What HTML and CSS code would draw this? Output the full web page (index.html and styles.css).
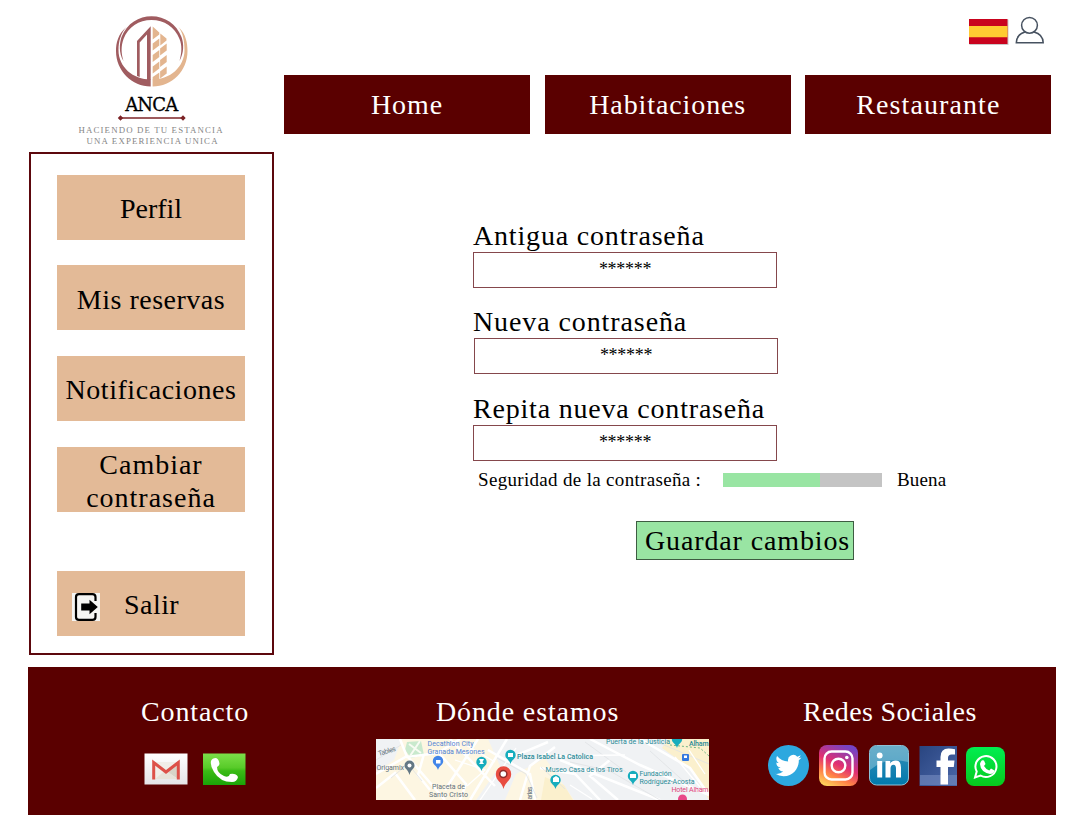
FILE: index.html
```html
<!DOCTYPE html>
<html lang="es">
<head>
<meta charset="utf-8">
<title>ANCA - Cambiar contraseña</title>
<link rel="stylesheet" href="styles.css">
</head>
<body>
<div class="page">
  <div class="left">
    <svg class="logo" width="180" height="147" viewBox="60 5 180 147">
      <path d="M126.500 27C118 34 116 43 116 51C116 71 132 86.500 150.700 86.500V79.500C133 79.500 118.500 67 118.500 50C118.500 41 121 33 126.500 27Z" fill="#a05c60"/>
      <path d="M178.500 27C186 34 187.500 43 187.500 51C187.500 71 172 86.500 152.600 86.500V79.500C170 79.500 184.500 67 184.500 50C184.500 41 183 33 178.500 27Z" fill="#e3b58f"/>
      <path d="M123.500 61C118.500 53 119.500 43 121.500 37C127 23 139 16.200 151.500 16.200C165 16.200 176.500 24 181.500 37C184 44 184 53 179.500 61C182 52 182 45 179.500 39C175 27 164 20 151.500 20C139 20 128 27 123.500 39C121 46 121 53 123.500 61Z" fill="#a05c60"/>
      <path d="M137 41L150.700 26.200V80H147V34.500L139.700 42.500V77L137 76Z" fill="#a05c60"/>
      <g fill="#e3b58f">
        <path d="M152.700 26.500L159.300 32.500V34.500L152.700 39.500ZM160.300 33.500L166.500 38.500V40.500L160.300 45.500Z"/>
        <path id="leaf" d="M152.700 43.500L159.300 38.500V45.500L152.700 50.500Z"/>
        <use href="#leaf" y="11.500"/><use href="#leaf" y="23"/><path d="M152.700 77L159.300 72.500V80H152.700Z"/>
        <use href="#leaf" x="7.400" y="5"/><use href="#leaf" x="7.400" y="16.500"/><use href="#leaf" x="7.400" y="28"/>
      </g>
      <text class="logo-name" x="151.700" y="110.500" text-anchor="middle" textLength="53">ANCA</text>
      <path d="M120 118H183" stroke="#7c2326" stroke-width="1.300"/>
      <path d="M120.500 115.300L123.200 118L120.500 120.700L117.800 118ZM183 115.300L185.700 118L183 120.700L180.300 118Z" fill="#7c2326"/>
      <text class="logo-tag" x="78.500" y="133" textLength="144">HACIENDO DE TU ESTANCIA</text>
      <text class="logo-tag" x="86.500" y="143.500" textLength="131">UNA EXPERIENCIA UNICA</text>
    </svg>
    <aside class="sidebar">
      <a class="item perfil">Perfil</a>
      <a class="item reservas">Mis reservas</a>
      <a class="item notis">Notificaciones</a>
      <a class="item cambiar">Cambiar<br>contraseña</a>
      <a class="item salir">
        <svg width="28" height="28" viewBox="0 0 28 28"><path fill="#f5f5f3" d="M0 0h28v28H0z"/><path d="M23.500 8V4Q23.500 1.200 20.500 1.200H7Q4 1.200 4 4V24Q4 26.800 7 26.800H20.500Q23.500 26.800 23.500 24V20" fill="none" stroke="#000" stroke-width="2.200"/><path d="M9.200 10.500H17.500V6.700L25.800 14L17.500 21.300V17.500H9.200Z"/></svg>
        <span>Salir</span>
      </a>
    </aside>
  </div>

  <div class="right">
    <div class="tools">
      <svg width="78" height="32" viewBox="967 15 78 32">
        <path d="M969.500 19.500H1008.500V45H969.500Z" fill="#c9c9c9"/><path d="M969 19H1007.500V44H969Z" fill="#c9031e"/><path d="M969 26H1007.500V37.300H969Z" fill="#ffcb32"/>
        <g fill="none" stroke="#475260" stroke-width="1.500"><circle cx="1029.500" cy="25.300" r="7.900"/><path d="M1025 32C1019.500 33.500 1016.500 37.500 1016.300 42.700H1043.200C1043 37.500 1040 33.500 1034 32"/></g>
      </svg>
    </div>
    <nav class="nav">
      <a class="home">Home</a><a class="hab">Habitaciones</a><a class="rest">Restaurante</a>
    </nav>
    <form class="form">
      <div class="field"><label class="l1">Antigua contraseña</label><div class="input">******</div></div>
      <div class="field second"><label class="l2">Nueva contraseña</label><div class="input">******</div></div>
      <div class="field"><label class="l3">Repita nueva contraseña</label><div class="input">******</div></div>
      <div class="strength"><span class="s-label">Seguridad de la contraseña :</span><div class="meter"><div class="level"></div></div><span class="s-value">Buena</span></div>
      <div class="save">Guardar cambios</div>
    </form>
  </div>

  <footer class="footer">
    <section class="contact">
      <h2>Contacto</h2>
      <svg width="104" height="34" viewBox="143 752 104 34">
        <defs>
          <linearGradient id="mail" x1="0" y1="0" x2="0" y2="1"><stop stop-color="#fff"/><stop offset="1" stop-color="#e5e5e8"/></linearGradient>
          <linearGradient id="tel" x1="0" y1="0" x2="0" y2="1"><stop stop-color="#7cdf49"/><stop offset=".45" stop-color="#58cb29"/><stop offset=".55" stop-color="#3bbb16"/><stop offset="1" stop-color="#1aa307"/></linearGradient>
        </defs>
        <path d="M144.500 753.500H187.500V784.500H144.500Z" fill="url(#mail)"/>
        <path d="M154 762H178V779H154Z" fill="#f1eee9"/><path d="M166 771L178 761V779Z" fill="#d8d4c8"/><path d="M155 779L166 770L177 779Z" fill="#e7e3d9"/>
        <path d="M153.700 779.500V762.500L166 772L178.300 762.500V779.500" fill="none" stroke="#dd5149" stroke-width="3"/>
        <path d="M203 753.500H245.500V785H203Z" fill="url(#tel)"/>
        <path d="M211 761Q212 758 216 758Q219 759 219.500 764Q219 766 217 767Q217 773 224 776Q229 778 230 774Q236 773 238 777Q237 782 232 782Q220 782 214 772Q210 766 211 761Z" fill="#fff"/>
      </svg>
    </section>
    <section class="where">
      <h2>Dónde estamos</h2>
      <svg class="map" width="333" height="61" viewBox="376 739 333 61">
        <path fill="#fdf6e2" d="M376 739H709V800H376Z"/>
        <path fill="#f0f2f4" d="M488 739H709V800H574L545 758L516 774L505 800H476L500 766ZM376 739H402L394 760L376 772Z"/>
        <path fill="#fbf0cd" d="M668 739H709V800L690 768L662 748ZM545 777L564 785L573 800H541Z"/>
        <path fill="#c9e9cd" d="M407 742L421 741L424 755L411 758L405 750Z"/>
        <g fill="none" stroke="#fff" stroke-width="2.500"><path d="M376 774L407 756L445 800M376 788L395 773L415 800M400 739L407 757L438 753L460 739M424 754L418 775L430 790M438 752L466 784L460 800M450 739L495 786M478 739L445 790M507 739L470 800M488 750L530 774L535 800M505 760L548 742M520 800L530 766L555 747M540 768L575 774L600 800M560 760L620 784L660 800M590 739L640 765L709 795M640 739L690 768L709 795M610 760L590 776L618 800"/></g>
        <g fill="none" stroke="#dfe2e5" stroke-width=".8"><path d="M497 758L526 774L537 798M541 767L565 789M570 762L610 771L660 800M585 742L626 772M650 751L689 786M376 760L401 745M391 778L408 764L422 781M650 739L709 764"/></g>
        <g fill="none" stroke="#fff" stroke-width="1.300"><path d="M455 760L485 770L467 786M466 745L495 762M516 748L480 800M675 757L700 787M689 750L705 774M570 785L592 799M543 756L625 755"/></g>
        <path d="M409 744L421 753M420 741L410 756" stroke="#f8fbf3" stroke-width="2"/>
        <path d="M670 745L700 748L709 756" fill="none" stroke="#70b686" stroke-dasharray="2 2"/>
        <path fill="#637784" d="M409.500 775C408 769 404.500 769 404.500 765.500A5 5 0 1 1 414.500 765.500C414.500 769 411 769 409.500 775Z"/>
        <path fill="#4285e9" d="M438 770C436.500 765 432.800 765 432.800 761A5.200 5.200 0 1 1 443.200 761C443.200 765 439.500 765 438 770Z"/>
        <g fill="#17adbd">
          <path id="p" d="M481.500 771C480 766 476.300 766 476.300 762A5.200 5.200 0 1 1 486.700 762C486.700 766 483 766 481.500 771Z"/>
          <use href="#p" x="29" y="-7"/><use href="#p" x="74" y="18"/><use href="#p" x="151.500" y="14"/><use href="#p" x="195.500" y="-23"/>
        </g>
        <rect x="682" y="754" width="7" height="7" rx="1" fill="#3579df"/><circle cx="682.500" cy="799" r="4.500" fill="#e84888"/>
        <g fill="#fff"><circle cx="409.500" cy="765.500" r="2"/><path d="M436 760H440.500V763.500H436ZM479 759H484L482.500 762L484 764H479L480.500 762ZM508 753H513V757H508ZM553 778L556 776L559 778V782H553ZM630 774H636V778H630ZM684 755.500H687V758H684Z"/></g>
        <path d="M503.500 789C501.500 781 495.800 781 495.800 774A7.700 7.700 0 0 1 511.200 774C511.200 781 505.500 781 503.500 789Z" fill="#e84c40"/><circle cx="503.300" cy="774" r="4.300" fill="#902d2a"/><circle cx="503.300" cy="774" r="2.800" fill="#fff"/>
        <g class="map-text">
          <g fill="#5385d5"><text x="427.500" y="746" textLength="46">Decathlon City</text><text x="427.500" y="753.700" textLength="57">Granada Mesones</text></g>
          <g fill="#63727d"><text x="376.500" y="770" textLength="27.500">Origamix</text><text x="432" y="789" textLength="33">Placeta de</text><text x="429" y="796.700" textLength="39">Santo Cristo</text><text transform="translate(379 756) rotate(-17)" textLength="18">Tables</text><text transform="translate(531.500 799.500) rotate(-90)" textLength="13">arias</text></g>
          <g fill="#298b98"><text class="strong" x="517" y="759" textLength="76">Plaza Isabel La Catolica</text><text x="545.500" y="772" textLength="77">Museo Casa de los Tiros</text><text x="606" y="744" textLength="64">Puerta de la Justicia</text><text x="639.500" y="776" textLength="32">Fundación</text><text x="639.500" y="783.500" textLength="55">Rodríguez-Acosta</text><text class="strong" x="689" y="746" textLength="19.500">Alham</text></g>
          <text x="671.500" y="792.300" textLength="37" fill="#de447b">Hotel Alham</text>
        </g>
      </svg>
    </section>
    <section class="social">
      <h2>Redes Sociales</h2>
      <svg width="240" height="43" viewBox="767 744 240 43">
        <defs>
          <linearGradient id="ig" x1=".2" y1="1" x2=".65" y2="0"><stop stop-color="#ffd35a"/><stop offset=".27" stop-color="#ff8147"/><stop offset=".55" stop-color="#e12f72"/><stop offset="1" stop-color="#7543c4"/></linearGradient>
          <linearGradient id="li" x1="0" y1="0" x2="0" y2="1"><stop stop-color="#398fb7"/><stop offset="1" stop-color="#0079ad"/></linearGradient>
          <linearGradient id="fb" x1="0" y1="0" x2="1" y2="1"><stop stop-color="#294580"/><stop offset="1" stop-color="#4b67a9"/></linearGradient>
          <linearGradient id="wa" x1="0" y1="0" x2="0" y2="1"><stop stop-color="#00ee51"/><stop offset="1" stop-color="#07c91d"/></linearGradient>
        </defs>
        <circle cx="788.500" cy="765.500" r="20.500" fill="#2da8df"/>
        <path transform="translate(775.300 752.500) scale(1.090)" fill="#fff" d="M23.950 4.570a10 10 0 0 1-2.820.77 4.960 4.960 0 0 0 2.160-2.720c-.95.550-2 .95-3.120 1.180a4.920 4.920 0 0 0-8.390 4.480C7.690 8.090 4.070 6.130 1.640 3.160a4.820 4.820 0 0 0-.67 2.480c0 1.710.87 3.210 2.190 4.090a4.900 4.900 0 0 1-2.230-.61v.060a4.920 4.920 0 0 0 3.950 4.830 5 5 0 0 1-2.210.08 4.940 4.940 0 0 0 4.600 3.420A9.870 9.870 0 0 1 0 19.540a14 14 0 0 0 7.550 2.210c9.050 0 14-7.500 14-13.980 0-.21 0-.42-.02-.63a9.940 9.940 0 0 0 2.420-2.570z"/>
        <rect x="819" y="745" width="39" height="41" rx="8" fill="url(#ig)"/>
        <g fill="none" stroke="#fff" stroke-width="2.400"><rect x="824.500" y="751.500" width="28" height="28" rx="7"/><circle cx="838.500" cy="765.500" r="6.800"/></g><circle cx="846.800" cy="757.500" r="1.800" fill="#fff"/>
        <rect x="869.500" y="745.500" width="39" height="39.500" rx="7" fill="url(#li)" stroke="#8cc3d8"/><path d="M870 760V753Q870 746 877 746H901Q908 746 908 753V762Q886 756 870 770Z" fill="#a9d4e2" opacity=".45"/>
        <g fill="#fff"><circle cx="879.700" cy="755.500" r="2.900"/><path d="M877.200 761H882.200V777.500H877.200ZM885.500 761H890.300V763.400Q892 760.600 895.700 760.600Q901 760.600 901 767.500V777.500H896V768.500Q896 764.700 893.500 764.700Q890.500 764.700 890.500 768.500V777.500H885.500Z"/></g>
        <path d="M919.500 746H957V786H919.500Z" fill="url(#fb)"/><path d="M920 775H957V785H920Z" fill="#7188bd" opacity=".65"/>
        <path fill="#fff" d="M940.500 784.500V767H936.500V760.500H940.500V757Q940.500 748.500 948.500 748.500Q952 748.500 955 749.300V754.500H951.500Q948 754.500 948 758V760.500H954.500L953.800 767H948V784.500Z"/>
        <rect x="966" y="747" width="39" height="39" rx="8" fill="url(#wa)"/>
        <path fill="none" stroke="#fff" stroke-width="2" d="M975 777.500L976.700 771.500A10.500 10.500 0 1 1 980.500 775.500Z"/>
        <path fill="#fff" d="M981 761.500Q982 759.500 984 760.500L985.500 764L984 766Q986 769.500 989.300 770.500L991 768.600L994.500 770.500Q994 774 990 774Q980.500 772 980 764Q980.200 762.500 981 761.500Z"/>
      </svg>
    </section>
  </footer>
</div>
</body>
</html>
```
FILE: styles.css
```css
* { box-sizing: border-box; }
body { margin: 0; background: #fff; font-family: "Liberation Serif", "Times New Roman", serif; font-size: 28px; color: #000; }
.page { width: 1082px; height: 815px; overflow: hidden; display: grid; grid-template-columns: 245px 768px; grid-template-rows: 667px 148px; column-gap: 10px; padding-left: 29px; }
.left { padding-top: 5px; }
.logo { display: block; margin-left: 31px; }
.logo-name { font-family: "DejaVu Serif", serif; font-size: 18px; stroke: #000; stroke-width: .3px; }
.logo-tag { font-size: 8.800px; fill: #858585; }
.sidebar { height: 503px; border: 2px solid #5c080d; padding: 21px 27px 0 26px; display: flex; flex-direction: column; gap: 26px; }
.item { height: 65px; flex: none; background: #e3ba97; display: flex; align-items: center; justify-content: center; line-height: 33px; text-align: center; padding-top: 2px; }
.item.reservas { margin-top: -1px; letter-spacing: .5px; padding-top: 4px; }
.notis { letter-spacing: .55px; }
.cambiar { letter-spacing: 1px; }
.item.salir { margin-top: 33px; justify-content: flex-start; padding-left: 15px; gap: 24px; letter-spacing: .45px; padding-top: 2px; }
.salir svg { margin-top: 4px; }
.tools { height: 75px; padding: 15px 7px 0 0; display: flex; justify-content: flex-end; align-items: flex-start; }
.nav { display: grid; grid-template-columns: 246px 246px 246px; column-gap: 14.700px; height: 59px; }
.nav a { background: #5a0000; color: #fff; display: flex; align-items: center; justify-content: center; letter-spacing: .9px; }
.nav .rest { letter-spacing: 1.100px; }
.form { margin: 84px 0 0 189px; width: 480px; }
.field { width: 304px; height: 87px; }
.field:first-child { height: 86px; }
.second .input { margin-left: 1px; margin-right: -1px; }
label { display: block; height: 34px; line-height: 36px; white-space: nowrap; }
.l1 { letter-spacing: .82px; }
.l2 { letter-spacing: .9px; }
.l3 { letter-spacing: .8px; }
.input { height: 36px; border: 1px solid #85474c; text-align: center; font-size: 18px; line-height: 32px; letter-spacing: -.3px; }
.strength { display: flex; align-items: center; height: 28px; margin-top: -12px; padding-left: 5px; font-size: 19px; white-space: nowrap; }
.s-label { width: 245px; letter-spacing: .32px; }
.meter { width: 159px; height: 14px; background: #c4c4c4; margin-right: 15px; }
.level { width: 97px; height: 14px; background: #99e5a3; }
.s-value { letter-spacing: .15px; }
.save { width: 218px; height: 39px; margin: 27px 0 0 163px; border: 1px solid #3e5c42; background: #99e5a3; padding-left: 8px; line-height: 38px; white-space: nowrap; letter-spacing: .87px; }
.footer { grid-column: 1 / -1; width: 1027.500px; margin-left: -1px; background: #5a0000; color: #fff; display: grid; grid-template-columns: 335px 333px 1fr; padding-top: 28px; }
.footer section { display: flex; flex-direction: column; }
h2 { margin: 0; font-weight: 400; font-size: 28px; height: 34px; line-height: 34px; letter-spacing: .87px; white-space: nowrap; }
.contact { padding-left: 113px; }
.contact svg { margin: 23px 0 0 2px; }
.where { padding-left: 13px; }
.where h2 { margin-left: 60px; }
.map { margin-top: 10px; }
.map-text { font-family: Roboto, sans-serif; font-size: 7px; }
.strong { font-weight: 500; }
.social { padding-left: 71px; }
.social h2 { margin-left: 36px; letter-spacing: .35px; }
.social svg { margin-top: 15px; }
```
